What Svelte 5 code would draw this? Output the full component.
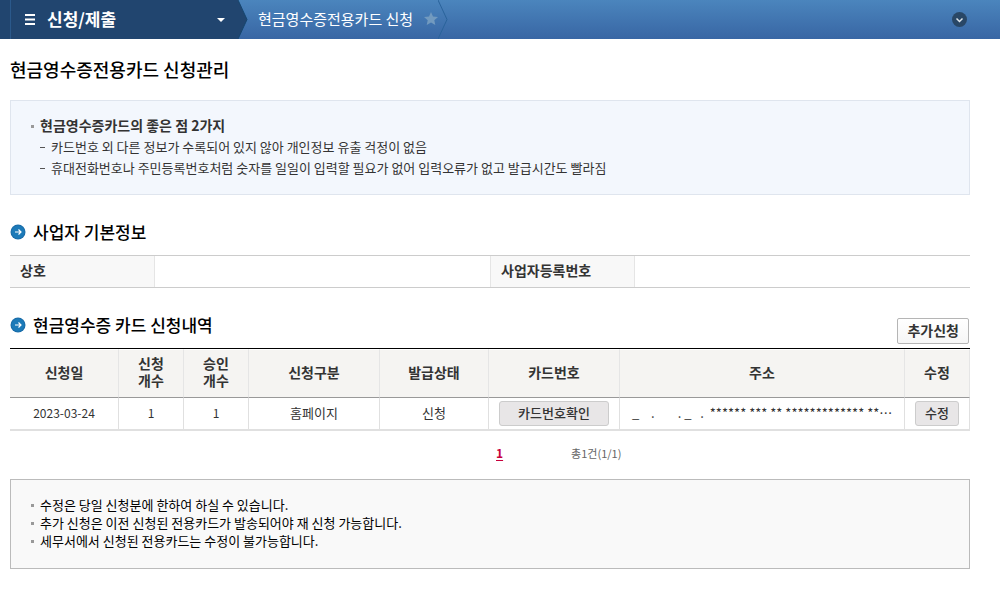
<script lang="ts">
  const benefits = [
    "카드번호 외 다른 정보가 수록되어 있지 않아 개인정보 유출 걱정이 없음",
    "휴대전화번호나 주민등록번호처럼 숫자를 일일이 입력할 필요가 없어 입력오류가 없고 발급시간도 빨라짐"
  ];

  const rows = [
    {
      date: "2023-03-24",
      requested: 1,
      approved: 1,
      type: "홈페이지",
      status: "신청",
      address: "_    .        . _   .  ****** *** ** ************* **⋯"
    }
  ];

  const notices = [
    "수정은 당일 신청분에 한하여 하실 수 있습니다.",
    "추가 신청은 이전 신청된 전용카드가 발송되어야 재 신청 가능합니다.",
    "세무서에서 신청된 전용카드는 수정이 불가능합니다."
  ];
</script>

{#snippet arrow()}
  <svg width="16" height="16" viewBox="0 0 16 16" aria-hidden="true">
    <circle cx="8" cy="8" r="7.5" fill="#1a6ca8" />
    <circle cx="8" cy="8" r="6.5" fill="#1c7ab8" />
    <path d="M5 8h6M8.5 5.5L11 8L8.5 10.5" fill="none" stroke="#fff" stroke-width="1.2" />
  </svg>
{/snippet}

<header>
  <button class="menu">
    <svg width="10" height="11" viewBox="0 0 10 11" aria-hidden="true">
      <path d="M0 1h10M0 5.5h10M0 10h10" stroke="#fff" stroke-width="2" />
    </svg>
    <span>신청/제출</span>
    <svg class="caret" width="8" height="4" viewBox="0 0 8 4" aria-hidden="true">
      <path d="M0 0h8L4 4z" fill="#fff" />
    </svg>
  </button>
  <svg width="10" height="39" viewBox="0 0 10 39" aria-hidden="true">
    <path d="M0 0L9 19.5L0 39z" fill="#21456f" />
    <path d="M0 0L9 19.5L0 39" fill="none" stroke="#16466f" />
  </svg>
  <a href="#current">현금영수증전용카드 신청</a>
  <button class="star" aria-label="즐겨찾기">
    <svg width="14" height="13" viewBox="0 0 14 13" aria-hidden="true">
      <path d="M7 0L9 4.4L14 5L10.3 8.2L11.3 13L7 10.6L2.7 13L3.7 8.2L0 5L5 4.4z" fill="#729abf" />
    </svg>
  </button>
  <svg width="11" height="39" viewBox="0 0 11 39" aria-hidden="true">
    <path d="M0 0L9 19.5L0 39" fill="none" stroke="#2a639b" />
  </svg>
  <button class="fold" aria-label="메뉴 펼치기">
    <svg width="15" height="15" viewBox="0 0 15 15" aria-hidden="true">
      <circle cx="7.5" cy="7.5" r="7.5" fill="#294766" />
      <path d="M4.5 6.5L7.5 9.5L10.5 6.5" fill="none" stroke="#dfe6ec" stroke-width="1.5" />
    </svg>
  </button>
</header>

<main>
  <h1>현금영수증전용카드 신청관리</h1>

  <div class="benefit">
    <strong>현금영수증카드의 좋은 점 2가지</strong>
    <ul>
      {#each benefits as text}
        <li>{text}</li>
      {/each}
    </ul>
  </div>

  <div class="section-head">
    <h2>{@render arrow()}사업자 기본정보</h2>
  </div>
  <table class="info">
    <tbody>
      <tr>
        <th scope="row">상호</th>
        <td></td>
        <th scope="row">사업자등록번호</th>
        <td></td>
      </tr>
    </tbody>
  </table>

  <div class="section-head">
    <h2>{@render arrow()}현금영수증 카드 신청내역</h2>
    <button class="add">추가신청</button>
  </div>
  <table class="list">
    <colgroup>
      <col class="date" />
      <col class="narrow" />
      <col class="narrow" />
      <col class="wide" />
      <col class="date" />
      <col class="wide" />
      <col />
      <col class="narrow" />
    </colgroup>
    <thead>
      <tr>
        <th>신청일</th>
        <th>신청<br />개수</th>
        <th>승인<br />개수</th>
        <th>신청구분</th>
        <th>발급상태</th>
        <th>카드번호</th>
        <th>주소</th>
        <th>수정</th>
      </tr>
    </thead>
    <tbody>
      {#each rows as row}
        <tr>
          <td class="num">{row.date}</td>
          <td class="num">{row.requested}</td>
          <td class="num">{row.approved}</td>
          <td>{row.type}</td>
          <td>{row.status}</td>
          <td><button class="small">카드번호확인</button></td>
          <td class="address">{row.address}</td>
          <td><button class="small edit">수정</button></td>
        </tr>
      {/each}
    </tbody>
  </table>

  <div class="paging">
    <a href="#page1">1</a>
    <span>총1건(1/1)</span>
  </div>

  <ul class="notice">
    {#each notices as text}
      <li>{text}</li>
    {/each}
  </ul>
</main>

<style>
  :global(body) {
    margin: 0;
    background: #fff;
    color: #333;
    font-family: "Noto Sans CJK KR", sans-serif;
    font-size: 13px;
  }
  button {
    margin: 0;
    padding: 0;
    border: 0;
    background: none;
    color: inherit;
    font-family: inherit;
    cursor: pointer;
  }
  svg {
    display: block;
    flex: none;
  }
  header {
    display: flex;
    align-items: center;
    height: 39px;
    background: linear-gradient(#4b85bd, #3866a4);
    color: #fff;
  }
  .menu {
    display: flex;
    align-items: center;
    width: 238px;
    height: 39px;
    padding: 0 13px 0 25px;
    background: linear-gradient(#2b598b, #2b598b) 10px 0 / 1px 100% no-repeat #21456f;
    font-size: 17px;
    font-weight: bold;
  }
  .menu span {
    margin-left: 12px;
    padding-bottom: 2px;
  }
  .menu .caret {
    margin-left: auto;
  }
  header a {
    margin-left: 10px;
    padding-bottom: 2px;
    color: #fff;
    font-size: 15px;
    text-decoration: none;
  }
  .star {
    margin: 0 0 3px 11px;
  }
  .fold {
    margin: 0 33px 0 auto;
  }
  main {
    padding: 18px 30px 30px 10px;
  }
  h1 {
    margin: 0 0 19px;
    color: #000;
    font-size: 18px;
    font-weight: 500;
    line-height: 24px;
  }
  ul {
    margin: 0;
    padding: 0;
    list-style: none;
  }
  .benefit {
    padding: 14px 29px 16px 19px;
    border: 1px solid #dfe5ee;
    background: #f3f7fd;
    line-height: 21px;
  }
  .benefit strong {
    display: block;
    font-size: 14px;
  }
  .benefit strong::before,
  .notice li::before {
    content: "";
    display: inline-block;
    width: 3px;
    height: 3px;
    margin: 0 6px 0 1px;
    background: #999;
    vertical-align: 3px;
  }
  .benefit li {
    padding-left: 10px;
  }
  .benefit li::before {
    content: "";
    display: inline-block;
    width: 5px;
    height: 1px;
    margin-right: 6px;
    background: #555;
    vertical-align: 4px;
  }
  .section-head {
    display: flex;
    justify-content: space-between;
    margin-top: 25px;
  }
  h2 {
    display: flex;
    align-items: center;
    gap: 7px;
    height: 24px;
    margin: 0 0 11px;
    color: #000;
    font-size: 17px;
    font-weight: 500;
    line-height: 24px;
  }
  .add {
    height: 26px;
    margin: 5px 1px 0 0;
    padding: 0 9px 2px;
    border: 1px solid #b5b5b5;
    border-radius: 2px;
    background: linear-gradient(#fff, #f6f6f6);
    font-size: 14px;
    font-weight: bold;
    line-height: 22px;
  }
  table {
    width: 100%;
    border-collapse: separate;
    border-spacing: 0;
    table-layout: fixed;
  }
  th,
  td {
    box-sizing: border-box;
    padding: 0;
  }
  th {
    font-size: 14px;
    font-weight: bold;
  }
  .info {
    border-top: 1px solid #ccc;
    border-bottom: 1px solid #ccc;
  }
  .info th {
    width: 145px;
    height: 31px;
    padding: 0 0 3px 10px;
    border-right: 1px solid #e5e5e5;
    background: #f8f8f8;
    line-height: 20px;
    text-align: left;
  }
  .info td + th {
    border-left: 1px solid #e5e5e5;
  }
  .list {
    border-top: 1px solid #000;
  }
  .list .date {
    width: 109px;
  }
  .list .narrow {
    width: 65px;
  }
  .list .wide {
    width: 131px;
  }
  .list th {
    height: 49px;
    padding-bottom: 3px;
    border-top: 1px solid #fff;
    border-right: 1px solid #e5e5e5;
    border-bottom: 1px solid #999;
    background: #f5f4f2;
    background-clip: padding-box;
    line-height: 17px;
  }
  .list td {
    height: 33px;
    padding-bottom: 2px;
    border-right: 1px solid #e0e0e0;
    border-bottom: 2px solid #e0e0e0;
    line-height: 20px;
    text-align: center;
  }
  .list .num {
    font-size: 12px;
  }
  .list .address {
    padding-left: 12px;
    overflow: hidden;
    text-align: left;
    white-space: pre;
  }
  .small {
    display: block;
    width: 110px;
    height: 25px;
    margin: 2px auto 0;
    padding-bottom: 2px;
    border: 1px solid #ccc;
    border-radius: 3px;
    background: #e8e6e7;
    font-size: 13px;
    font-weight: 500;
    line-height: 20px;
  }
  .small.edit {
    width: 44px;
  }
  .paging {
    display: flex;
    align-items: center;
    gap: 68px;
    margin: 10px 0 14px 50%;
    padding-left: 6px;
    font-size: 12px;
    line-height: 24px;
  }
  .paging a {
    color: #c7003b;
    font-weight: bold;
    text-underline-offset: 2px;
  }
  .paging span {
    color: #666;
    font-size: 11px;
  }
  .notice {
    padding: 16px 29px 18px 19px;
    border: 1px solid #bbb;
    background: #f9f9f9;
    color: #000;
    line-height: 18px;
  }
</style>
